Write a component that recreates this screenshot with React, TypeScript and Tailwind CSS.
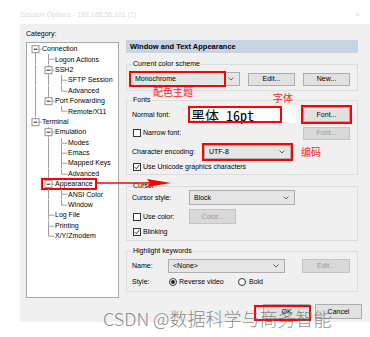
import React from 'react'

type Node = { t: string; l: number; exp?: boolean }

const tree: Node[] = [
  { t: 'Connection', l: 0, exp: true },
  { t: 'Logon Actions', l: 1 },
  { t: 'SSH2', l: 1, exp: true },
  { t: 'SFTP Session', l: 2 },
  { t: 'Advanced', l: 2 },
  { t: 'Port Forwarding', l: 1, exp: true },
  { t: 'Remote/X11', l: 2 },
  { t: 'Terminal', l: 0, exp: true },
  { t: 'Emulation', l: 1, exp: true },
  { t: 'Modes', l: 2 },
  { t: 'Emacs', l: 2 },
  { t: 'Mapped Keys', l: 2 },
  { t: 'Advanced', l: 2 },
  { t: 'Appearance', l: 1, exp: true },
  { t: 'ANSI Color', l: 2 },
  { t: 'Window', l: 2 },
  { t: 'Log File', l: 1 },
  { t: 'Printing', l: 1 },
  { t: 'X/Y/Zmodem', l: 1 },
]

// does the branch at level `a` continue below row i?
function hasMore(i: number, a: number) {
  for (let j = i + 1; j < tree.length; j++) {
    if (tree[j].l < a) return false
    if (tree[j].l === a) return true
  }
  return false
}

const LINE = '#a0a0a0'

function Cell({ guide, up, down, exp }: { guide?: boolean; up?: boolean; down?: boolean; exp?: boolean }) {
  return (
    <svg width="13" height="10.4" viewBox="0 0 13 10.4" className="shrink-0">
      {guide && <line x1="6.5" y1="0" x2="6.5" y2="10.4" stroke={LINE} />}
      {up && <line x1="6.5" y1="0" x2="6.5" y2="5.2" stroke={LINE} />}
      {down && <line x1="6.5" y1="5.2" x2="6.5" y2="10.4" stroke={LINE} />}
      {(up || down) && <line x1="6.5" y1="5.2" x2="12.5" y2="5.2" stroke={LINE} />}
      {exp && (
        <>
          <rect x="3" y="1.7" width="7" height="7" fill="#fff" stroke="#919191" />
          <line x1="4.6" y1="5.2" x2="8.4" y2="5.2" stroke="#222" />
        </>
      )}
    </svg>
  )
}

function Chevron() {
  return (
    <svg width="6" height="4" viewBox="0 0 6 4">
      <path d="M0.5 0.5 L3 3 L5.5 0.5" fill="none" stroke="#555" strokeWidth="0.9" />
    </svg>
  )
}

function Select({ value, w, h }: { value: string; w: string; h: string }) {
  return (
    <div className={`${w} ${h} flex shrink-0 items-center justify-between border border-[#adadad] bg-[#e5e5e5] pl-[4px] pr-[5px]`}>
      <span>{value}</span>
      <Chevron />
    </div>
  )
}

function Btn({ label, disabled, w = 'w-[47px]', h = 'h-[13px]' }: { label: string; disabled?: boolean; w?: string; h?: string }) {
  return (
    <div
      className={`${w} ${h} flex shrink-0 items-center justify-center border ${
        disabled ? 'border-[#c4c4c4] bg-[#d9d9d9] text-[#9a9a9a]' : 'border-[#adadad] bg-[#e1e1e1] text-black'
      }`}
    >
      {label}
    </div>
  )
}

function Check({ on }: { on?: boolean }) {
  return (
    <div className="flex h-[8px] w-[8px] shrink-0 items-center justify-center border border-[#333] bg-white">
      {on && (
        <svg width="6" height="6" viewBox="0 0 6 6">
          <path d="M0.6 3.1 L2.3 4.8 L5.4 0.9" fill="none" stroke="#222" strokeWidth="0.9" />
        </svg>
      )}
    </div>
  )
}

function Radio({ on }: { on?: boolean }) {
  return (
    <div className="flex h-[8px] w-[8px] shrink-0 items-center justify-center rounded-full border border-[#333] bg-white">
      {on && <div className="h-[4px] w-[4px] rounded-full bg-[#222]" />}
    </div>
  )
}

function Group({ title, children, className = '' }: { title: string; children: React.ReactNode; className?: string }) {
  return (
    <fieldset className={`border border-[#dcdcdc] ${className}`}>
      <legend className="ml-[5px] px-[1px] leading-[8px]">{title}</legend>
      {children}
    </fieldset>
  )
}

export default function App() {
  return (
    <div className="relative h-[337px] w-[370px] overflow-hidden bg-white font-['Liberation_Sans','Noto_Sans_CJK_SC',sans-serif] text-[7px] leading-[8px] text-black">
      {/* faded title bar */}
      <div className="flex h-[24px] items-start justify-between pl-[20px] pr-[10px] pt-[11px] text-[#dadada]">
        <span>Session Options - 192.168.56.101 (1)</span>
        <span className="text-[8px]">×</span>
      </div>

      <div className="ml-[20px] flex h-[298px] bg-[#f0f0f0]">
        {/* category tree */}
        <div className="w-[99px] shrink-0 pl-[6px]">
          <div className="pt-[6px]">Category:</div>
          <div className="mt-[4px] h-[256px] w-[93px] border border-[#a9a9a9] bg-white pl-[2px] pt-[1px]">
            {tree.map((n, i) => {
              const guides = Array.from({ length: n.l }, (_, a) => hasMore(i, a))
              const own = <Cell up={i > 0} down={hasMore(i, n.l)} exp={n.exp} />
              return (
                <div key={i} className="flex h-[10.4px] items-center whitespace-nowrap">
                  {guides.map((g, a) => (
                    <Cell key={a} guide={g} />
                  ))}
                  {n.t === 'Appearance' ? (
                    <div className="flex items-center pr-[3px] outline-2 outline-offset-[-1px] outline-solid outline-[#ff0000]">
                      {own}
                      <span>{n.t}</span>
                    </div>
                  ) : (
                    <>
                      {own}
                      <span>{n.t}</span>
                    </>
                  )}
                </div>
              )
            })}
          </div>
        </div>

        {/* settings panel */}
        <div className="ml-[7px] w-[232px] shrink-0 pt-[16px]">
          <div className="flex h-[13px] items-center bg-[#c8d4e1] pl-[4px] text-[7.5px] font-bold">
            Window and Text Appearance
          </div>

          <Group title="Current color scheme" className="mt-[7px] pb-[3px] pt-[3px]">
            <div className="flex h-[16px] items-center pl-[3px]">
              <div className="relative">
                <Select value="Monochrome" w="w-[110px]" h="h-[14px]" />
                <div className="absolute left-[-1px] top-[-1px] h-[16px] w-[97px] border-2 border-[#ff0000]" />
              </div>
              <div className="ml-[8px]">
                <Btn label="Edit..." />
              </div>
              <div className="ml-[8px]">
                <Btn label="New..." />
              </div>
            </div>
          </Group>

          <Group title="Fonts" className="mt-[5px] pb-[1px]">
            <div className="mt-[2px] flex h-[17px] items-center">
              <div className="w-[61px] shrink-0 pl-[5px]">Normal font:</div>
              <div className="relative flex h-[17px] w-[108px] shrink-0 items-center bg-white pl-[3px] font-['Noto_Sans_Mono_CJK_SC','DejaVu_Sans_Mono','Noto_Sans_CJK_SC',monospace] text-[14px] leading-[14px]">
                黑体 16pt
                <div className="absolute left-0 top-0 h-[17px] w-[94px] border-2 border-[#ff0000]" />
              </div>
              <div className="ml-[7px] outline-2 outline-offset-[0px] outline-solid outline-[#ff0000]">
                <Btn label="Font..." h="h-[15px]" />
              </div>
            </div>
            <div className="mt-[3px] flex h-[14px] items-center">
              <div className="flex w-[176px] shrink-0 items-center gap-[2px] pl-[6px]">
                <Check />
                <span>Narrow font:</span>
              </div>
              <Btn label="Font..." disabled />
            </div>
            <div className="mt-[3px] flex h-[18px] items-center">
              <div className="w-[75px] shrink-0 pl-[5px]">Character encoding:</div>
              <div className="flex h-[18px] w-[91px] shrink-0 items-center justify-center border-2 border-[#ff0000]">
                <Select value="UTF-8" w="w-[87px]" h="h-[14px]" />
              </div>
              <span className="ml-[8px] font-['Noto_Sans_CJK_SC',sans-serif] text-[10px] leading-[10px] text-[#ff1a1a]">编码</span>
            </div>
            <div className="flex h-[12px] items-center gap-[2px] pl-[6px]">
              <Check on />
              <span>Use Unicode graphics characters</span>
            </div>
          </Group>

          <Group title="Cursor" className="mt-[7px] pb-[2px]">
            <div className="flex h-[15px] items-center">
              <div className="w-[62px] shrink-0 pl-[5px]">Cursor style:</div>
              <Select value="Block" w="w-[106px]" h="h-[15px]" />
            </div>
            <div className="mt-[4px] flex h-[15px] items-center">
              <div className="flex w-[62px] shrink-0 items-center gap-[2px] pl-[6px]">
                <Check />
                <span>Use color:</span>
              </div>
              <Btn label="Color..." disabled h="h-[15px]" />
            </div>
            <div className="mt-[2px] flex h-[12px] items-center gap-[2px] pl-[6px]">
              <Check on />
              <span>Blinking</span>
            </div>
          </Group>

          <Group title="Highlight keywords" className="mt-[6px] pb-[3px]">
            <div className="mt-[4px] flex h-[14px] items-center">
              <div className="w-[41px] shrink-0 pl-[5px]">Name:</div>
              <Select value="<None>" w="w-[117px]" h="h-[14px]" />
              <div className="ml-[17px]">
                <Btn label="Edit..." disabled w="w-[48px]" h="h-[14px]" />
              </div>
            </div>
            <div className="mt-[3px] flex h-[12px] items-center">
              <div className="w-[41px] shrink-0 pl-[5px]">Style:</div>
              <div className="ml-[1px] flex w-[69px] shrink-0 items-center gap-[2px]">
                <Radio on />
                <span>Reverse video</span>
              </div>
              <div className="flex items-center gap-[3px]">
                <Radio />
                <span>Bold</span>
              </div>
            </div>
          </Group>

          <div className="mt-[12px] flex h-[15px] items-center pl-[137px]">
            <Btn label="OK" h="h-[15px]" />
            <div className="ml-[5px]">
              <Btn label="Cancel" h="h-[15px]" />
            </div>
          </div>
        </div>
      </div>

      {/* annotations */}
      <div className="absolute left-[153px] top-[87px] font-['Noto_Sans_CJK_SC',sans-serif] text-[10px] leading-[10px] text-[#ff1a1a]">
        配色主题
      </div>
      <div className="absolute left-[273px] top-[93px] font-['Noto_Sans_CJK_SC',sans-serif] text-[10px] leading-[10px] text-[#ff1a1a]">
        字体
      </div>
      <svg className="absolute left-[96px] top-[178px]" width="76" height="10" viewBox="0 0 76 10">
        <line x1="0" y1="5" x2="54" y2="5" stroke="#ff0000" strokeWidth="1.6" />
        <polygon points="51,1 75,5 51,9 54,5" fill="#ff0000" />
      </svg>
      <div className="absolute left-[254px] top-[305px] h-[16px] w-[57px] border-2 border-[#ff0000]" />
      <div className="absolute left-[103px] top-[309px] whitespace-nowrap font-['Noto_Sans_CJK_SC',sans-serif] text-[18px] font-light leading-[18px] text-[rgba(110,110,110,0.8)]">
        CSDN @数据科学与商务智能
      </div>
    </div>
  )
}
